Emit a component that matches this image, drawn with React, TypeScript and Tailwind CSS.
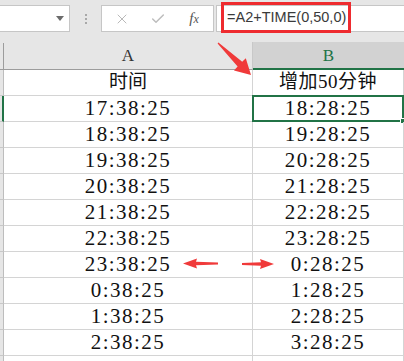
import { X, Check } from 'lucide-react'

const rows: [string, string][] = [
  ['时间', '增加50分钟'],
  ['17:38:25', '18:28:25'],
  ['18:38:25', '19:28:25'],
  ['19:38:25', '20:28:25'],
  ['20:38:25', '21:28:25'],
  ['21:38:25', '22:28:25'],
  ['22:38:25', '23:28:25'],
  ['23:38:25', '0:28:25'],
  ['0:38:25', '1:28:25'],
  ['1:38:25', '2:28:25'],
  ['2:38:25', '3:28:25'],
  ['', ''],
]

const cellFont = { fontFamily: '"Liberation Serif", "Noto Sans CJK SC", serif' }

function Toolbar() {
  return (
    <div className="flex h-[42px] items-start bg-[#e6e6e6] pt-[5px]">
      <div className="relative h-[27px] w-[70px] border border-l-0 border-[#c6c6c6] bg-white">
        <div className="absolute right-[5px] top-[10px] h-0 w-0 border-x-[4px] border-t-[5px] border-x-transparent border-t-[#6b6b6b]" />
      </div>
      <div className="flex w-[31px] flex-col items-center gap-[2px] pt-[9px]">
        <span className="h-[2px] w-[2px] bg-[#a8a8a8]" />
        <span className="h-[2px] w-[2px] bg-[#a8a8a8]" />
        <span className="h-[2px] w-[2px] bg-[#a8a8a8]" />
      </div>
      <div className="flex h-[27px] w-[113px] items-center border border-[#c6c6c6] bg-white">
        <div className="flex w-[38px] justify-center pl-[2px]">
          <X size={16} strokeWidth={1.4} color="#b4b4b4" />
        </div>
        <div className="flex w-[36px] justify-center">
          <Check size={16} strokeWidth={2.2} color="#bdbdbd" />
        </div>
        <div
          className="flex w-[36px] items-baseline justify-center text-[15px] italic leading-none text-[#555]"
          style={{ fontFamily: '"Liberation Serif", serif' }}
        >
          <span>f</span>
          <span className="text-[12px]">x</span>
        </div>
      </div>
      <div className="ml-[2px] flex h-[27px] flex-1 items-center border border-r-0 border-[#c6c6c6] bg-white pl-[4px]">
        <div
          className="-mt-[2px] flex h-[31px] w-[130px] items-center border-[3px] border-[#ee2b2f] pl-[3px] text-[14.5px] text-[#3a3a3a]"
          style={{ fontFamily: '"Liberation Sans", sans-serif' }}
        >
          =A2+TIME(0,50,0)
        </div>
      </div>
    </div>
  )
}

function HeaderRow() {
  return (
    <div className="flex h-[28px] bg-[#e6e6e6]" style={{ fontFamily: '"Liberation Serif", serif' }}>
      <div className="mt-[1px] w-[4px] border-r border-b border-[#9c9c9c]" />
      <div className="flex w-[249px] items-center justify-center border-r border-b border-r-[#c8c8c8] border-b-[#9c9c9c] pt-[1px] text-[17px] text-[#333]">
        A
      </div>
      <div className="flex w-[151px] items-center justify-center border-b-2 border-[#217346] bg-[#d2d2d2] pt-[2px] text-[17px] text-[#217346]">
        B
      </div>
    </div>
  )
}

function Arrows() {
  return (
    <svg className="pointer-events-none absolute left-0 top-0" width="404" height="361">
      <polygon
        points="217.6,43.6 237.6,66.6 234,70.5 251,75 245.8,58.2 242.2,61.8 218.4,42.4"
        fill="#f03a3a"
      />
      <polygon
        points="183,263.5 197,258.5 196,261.8 218,262.6 218,264.4 196,265.2 197,268.5"
        fill="#f03a3a"
      />
      <polygon
        points="274,264 260,259 261,262.3 242,263.1 242,264.9 261,265.7 260,269"
        fill="#f03a3a"
      />
    </svg>
  )
}

export default function App() {
  return (
    <div className="relative h-[361px] w-[404px] overflow-hidden bg-white">
      <Toolbar />
      <HeaderRow />
      {rows.map(([a, b], i) => {
        const selected = i === 1
        return (
          <div key={i} className="flex h-[26px]" style={cellFont}>
            <div
              className={`w-[4px] border-r border-b bg-[#e6e6e6] ${
                selected ? 'border-r-[#217346] border-r-2 border-b-[#c8c8c8]' : 'border-r-[#bdbdbd] border-b-[#c8c8c8]'
              }`}
            />
            <div
              className={`flex w-[249px] items-center justify-center border-r border-b border-[#d4d4d4] text-[#111] ${
                i === 0 ? 'text-[19px]' : 'text-[21px] tracking-[1.5px]'
              }`}
            >
              {a}
            </div>
            <div
              className={`relative flex w-[151px] items-center justify-center border-r border-b border-[#d4d4d4] text-[#111] ${
                i === 0 ? 'text-[19px] tracking-[0.5px]' : 'text-[21px] tracking-[1.5px]'
              }`}
            >
              {b}
              {selected && (
                <div className="absolute -left-[1px] -top-[1px] h-[27px] w-[152px] border-2 border-[#217346]">
                  <div className="absolute -bottom-[4px] -right-[4px] h-[6px] w-[6px] border border-white bg-[#217346]" />
                </div>
              )}
            </div>
            <div className="flex-1 border-b border-[#d4d4d4]" />
          </div>
        )
      })}
      <Arrows />
    </div>
  )
}
